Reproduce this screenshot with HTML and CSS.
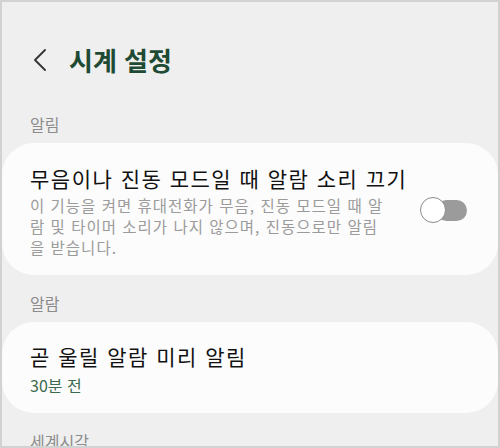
FILE: index.html
```html
<!DOCTYPE html>
<html lang="ko">
<head>
    <meta charset="UTF-8">
    <meta name="viewport" content="width=device-width, initial-scale=1.0">
    <title>시계 설정</title>
    <link rel="stylesheet" href="styles.css">
</head>
<body>
    <div class="screen">
        <header class="top-bar">
            <a class="back-btn" href="#" aria-label="뒤로">
                <svg width="16" height="22" viewBox="0 0 16 22">
                    <polyline points="13,1 3,11 13,21" fill="none" stroke="#333" stroke-width="1.8" stroke-linejoin="round" stroke-linecap="round"/>
                </svg>
            </a>
            <h1 class="page-title">시계 설정</h1>
        </header>

        <div class="section-label">알림</div>
        <div class="card card-row">
            <div class="card-text">
                <div class="item-title">무음이나 진동 모드일 때 알람 소리 끄기</div>
                <div class="item-desc">이 기능을 켜면 휴대전화가 무음, 진동 모드일 때 알람 및 타이머 소리가 나지 않으며, 진동으로만 알림을 받습니다.</div>
            </div>
            <div class="switch">
                <span class="switch-track"></span>
                <span class="switch-thumb"></span>
            </div>
        </div>

        <div class="section-label">알람</div>
        <div class="card">
            <div class="item-title">곧 울릴 알람 미리 알림</div>
            <div class="item-value">30분 전</div>
        </div>

        <div class="section-label">세계시각</div>
    </div>
</body>
</html>
```

FILE: styles.css
```css
body {
    margin: 0;
    font-family: "Noto Sans CJK KR", "Noto Sans", sans-serif;
    background-color: #efefef;
}
.screen {
    width: 500px;
    height: 448px;
    box-sizing: border-box;
    border: 2px solid #d2d2d2;
    background-color: #efefef;
    overflow: hidden;
}
.top-bar {
    display: flex;
    align-items: center;
    gap: 21px;
    padding: 34px 0 0 30px;
    height: 48px;
}
.back-btn {
    display: flex;
    align-items: center;
}
.page-title {
    margin: 0;
    font-size: 26px;
    line-height: 48px;
    font-weight: 700;
    color: #1f4a33;
}
.section-label {
    margin-top: 28px;
    padding-left: 28px;
    font-size: 16px;
    line-height: 24px;
    color: #8c8c8c;
}
.card + .section-label {
    margin-top: 16px;
}
.card {
    margin-top: 7px;
    background-color: #fcfcfc;
    border-radius: 32px;
    padding: 19px 31px 17px 28px;
}
.card-row {
    display: flex;
    align-items: center;
    padding-top: 20px;
}
.card-text {
    flex: 1;
    min-width: 0;
}
.item-title {
    font-size: 21px;
    line-height: 30px;
    letter-spacing: 1.5px;
    color: #111;
    white-space: nowrap;
}
.item-desc {
    max-width: 362px;
    margin-top: 2px;
    font-size: 15.5px;
    line-height: 21px;
    letter-spacing: 1px;
    color: #9b9b9b;
}
.item-value {
    margin-top: 3px;
    font-size: 16px;
    line-height: 22px;
    color: #3c6a4f;
}
.switch {
    position: relative;
    flex: none;
    width: 47px;
    height: 27px;
    margin-left: 10px;
}
.switch-track {
    position: absolute;
    left: 16px;
    right: 0;
    top: 3px;
    height: 21px;
    border-radius: 11px;
    background-color: #9b9b9b;
}
.switch-thumb {
    position: absolute;
    left: 0;
    top: 0;
    width: 24px;
    height: 24px;
    border: 1.5px solid #8a8a8a;
    border-radius: 50%;
    background-color: #fff;
}
```
